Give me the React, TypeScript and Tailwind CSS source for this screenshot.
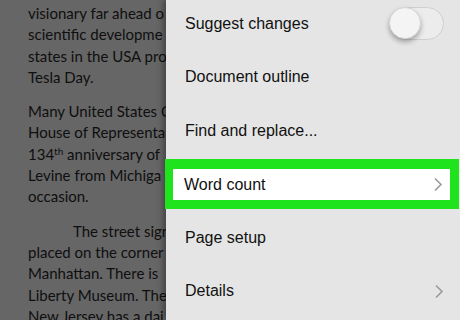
const DOC_FONT = { fontFamily: "Lato, 'Open Sans', sans-serif" };
const MENU_FONT = { fontFamily: "'Liberation Sans', Arial, sans-serif" };

function Chevron() {
  return (
    <svg width="10" height="15" viewBox="0 0 10 15" className="shrink-0">
      <path d="M2 1.5 L8 7.5 L2 13.5" fill="none" stroke="#9a9a9a" strokeWidth="1.6" />
    </svg>
  );
}

function Toggle() {
  return (
    <div className="relative h-[33px] w-[55px] rounded-full border-[1.5px] border-[#cfcfcf] bg-[#ececec]">
      <div className="absolute left-[-1px] top-[-1px] h-[32px] w-[32px] rounded-full border border-[#d5d5d5] bg-[#f4f4f4] shadow-[0_3px_5px_rgba(0,0,0,0.3)]" />
    </div>
  );
}

// the page behind the menu, clipped by the panel edge
function DocText() {
  return (
    <div
      className="w-[166px] shrink-0 overflow-hidden whitespace-nowrap bg-[#666666] pl-[28px] pt-[3px] text-[15px] leading-[21.3px] text-[#0f0f0f]"
      style={DOC_FONT}
    >
      <p className="mb-[13px]">
        visionary far ahead o
        <br />
        scientific developme
        <br />
        states in the USA pro
        <br />
        Tesla Day.
      </p>
      <p className="mb-[13px]">
        Many United States C
        <br />
        House of Representa
        <br />
        134<sup className="text-[10px]">th</sup> anniversary of
        <br />
        Levine from Michiga
        <br />
        occasion.
      </p>
      <p>
        <span className="pl-[45px]">The street sign</span>
        <br />
        placed on the corner
        <br />
        Manhattan. There is
        <br />
        Liberty Museum. The
        <br />
        New Jersey has a dai
      </p>
    </div>
  );
}

const ROWS = [
  { label: "Suggest changes", toggle: true },
  { label: "Document outline" },
  { label: "Find and replace..." },
  { label: "Word count", chevron: true, highlight: true },
  { label: "Page setup" },
  { label: "Details", chevron: true },
];

export default function App() {
  return (
    <div className="flex h-[320px] w-[460px] overflow-hidden">
      <DocText />
      <div
        className="relative flex-1 bg-[#e5e5e5] shadow-[-3px_0_6px_rgba(0,0,0,0.35)]"
        style={MENU_FONT}
      >
        <div className="-mt-[3px] flex flex-col">
          {ROWS.map((row) =>
            row.highlight ? (
              <div key={row.label} className="flex h-[53.5px] items-center">
                <div className="-ml-[1px] flex h-[50px] w-full items-center bg-[#1fe31c] pb-[9px] pl-[8px] pr-[9px] pt-[10px]">
                  <div className="flex h-full w-full items-center justify-between bg-white pl-[11px] pr-[7px] text-[16px] text-[#111]">
                    <span>{row.label}</span>
                    <Chevron />
                  </div>
                </div>
              </div>
            ) : (
              <div
                key={row.label}
                className="flex h-[53.5px] items-center justify-between pl-[19px] pr-[16px] text-[16px] text-[#111]"
              >
                <span>{row.label}</span>
                {row.toggle && <Toggle />}
                {row.chevron && <Chevron />}
              </div>
            )
          )}
        </div>
      </div>
    </div>
  );
}
